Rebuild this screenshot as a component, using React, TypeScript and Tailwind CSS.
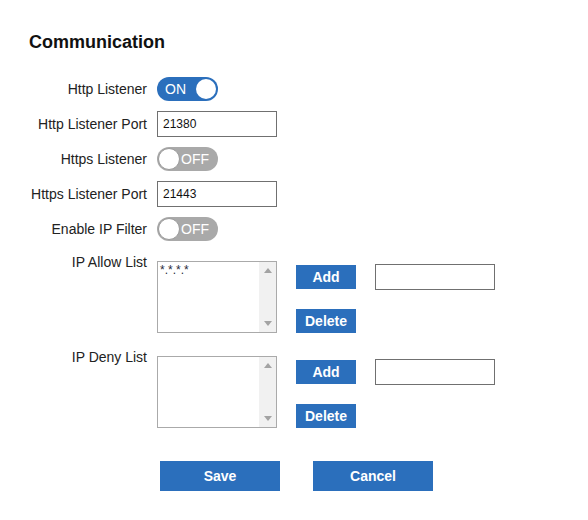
import React from "react";

const BLUE = "bg-[#2b6fbc]";

const Toggle: React.FC<{ on: boolean }> = ({ on }) =>
  on ? (
    <div className={`relative flex h-[24px] w-[61px] items-center rounded-full ${BLUE}`}>
      <span className="pl-[8px] text-[14px] leading-none text-white">ON</span>
      <span className="absolute right-[2px] top-[2px] h-[20px] w-[20px] rounded-full bg-white" />
    </div>
  ) : (
    <div className="relative flex h-[24px] w-[61px] items-center rounded-full bg-[#a9a9a9]">
      <span className="absolute left-[1px] top-[1px] h-[22px] w-[22px] rounded-full border border-[#9a9a9a] bg-white" />
      <span className="pl-[24px] text-[14px] leading-none text-white">OFF</span>
    </div>
  );

const TextBox: React.FC<{ value?: string }> = ({ value }) => (
  <input
    readOnly
    value={value ?? ""}
    className="h-[26px] w-[120px] border border-[#707070] bg-white px-[5px] text-[12px] text-[#111] outline-none"
  />
);

const ListBox: React.FC<{ items: string[] }> = ({ items }) => (
  <div className="flex h-[72px] w-[120px] border border-[#aaaaaa] bg-white">
    <div className="flex-1 px-[2px] pt-[1px] text-[12px] leading-[14px] text-[#2a2a3a]">
      {items.map((i) => (
        <div key={i}>{i}</div>
      ))}
    </div>
    <div className="flex w-[17px] flex-col items-center justify-between bg-[#f1f1f1] py-[6px]">
      <svg width="8" height="5" viewBox="0 0 8 5">
        <path d="M4 0 L8 5 L0 5 Z" fill="#a3a3a3" />
      </svg>
      <svg width="8" height="5" viewBox="0 0 8 5">
        <path d="M0 0 L8 0 L4 5 Z" fill="#a3a3a3" />
      </svg>
    </div>
  </div>
);

const SmallButton: React.FC<{ label: string }> = ({ label }) => (
  <button className={`h-[24px] w-[60px] ${BLUE} text-[14px] font-bold text-white`}>{label}</button>
);

const ListRow: React.FC<{ label: string; items: string[] }> = ({ label, items }) => (
  <div className="grid grid-cols-[118px_1fr] gap-x-[10px]">
    <div className="text-right text-[14px] leading-[16px]">{label}</div>
    <div className="mt-[7px] flex items-start gap-[19px]">
      <ListBox items={items} />
      <div className="flex h-[72px] flex-col justify-between pt-[4px]">
        <SmallButton label="Add" />
        <SmallButton label="Delete" />
      </div>
      <div className="pt-[3px]">
        <TextBox />
      </div>
    </div>
  </div>
);

const Row: React.FC<{ label: string; children: React.ReactNode }> = ({ label, children }) => (
  <div className="grid h-[35px] grid-cols-[118px_1fr] items-center gap-x-[10px]">
    <div className="whitespace-nowrap text-right text-[14px] leading-[16px]">{label}</div>
    <div className="flex items-center">{children}</div>
  </div>
);

export default function App() {
  return (
    <div className="min-h-[520px] w-[588px] bg-white pl-[29px] pt-[32px] font-['Liberation_Sans',Arial,sans-serif] text-[#222]">
      <h2 className="text-[18px] font-bold leading-[21px] text-[#111]">Communication</h2>

      <div className="mt-[18px] flex flex-col">
        <Row label="Http Listener">
          <Toggle on />
        </Row>
        <Row label="Http Listener Port">
          <TextBox value="21380" />
        </Row>
        <Row label="Https Listener">
          <Toggle on={false} />
        </Row>
        <Row label="Https Listener Port">
          <TextBox value="21443" />
        </Row>
        <Row label="Enable IP Filter">
          <Toggle on={false} />
        </Row>
      </div>

      <div className="mt-[8px] flex flex-col gap-[16px]">
        <ListRow label="IP Allow List" items={["*.*.*.*"]} />
        <ListRow label="IP Deny List" items={[]} />
      </div>

      <div className="mt-[33px] flex gap-[33px] pl-[131px]">
        <button className={`h-[30px] w-[120px] ${BLUE} text-[14px] font-bold text-white`}>Save</button>
        <button className={`h-[30px] w-[120px] ${BLUE} text-[14px] font-bold text-white`}>Cancel</button>
      </div>
    </div>
  );
}
